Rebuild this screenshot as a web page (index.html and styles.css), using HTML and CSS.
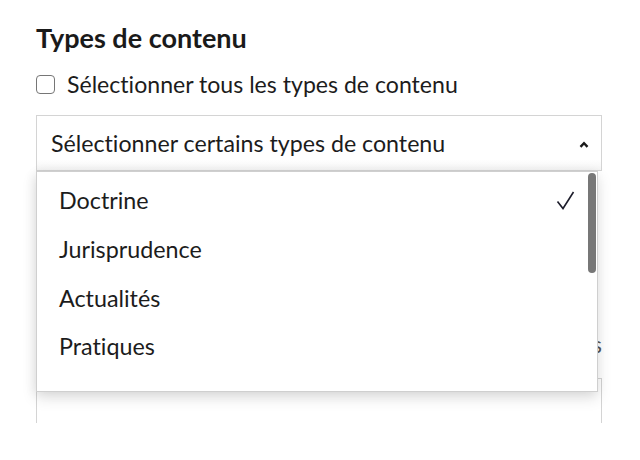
FILE: index.html
```html
<!DOCTYPE html>
<html lang="fr">
<head>
<meta charset="utf-8">
<link rel="stylesheet" href="styles.css">
</head>
<body>
<div class="page">
  <h2 class="title">Types de contenu</h2>
  <label class="check-row"><span class="checkbox"></span><span>Sélectionner tous les types de contenu</span></label>
  <div class="select-wrap">
    <div class="select">
      <span>Sélectionner certains types de contenu</span>
      <svg class="caret" width="10" height="7" viewBox="0 0 10 7"><polyline points="1.5,5.8 5,2.2 8.5,5.8" fill="none" stroke="#1a1a1a" stroke-width="2.4"/></svg>
    </div>
    <div class="under">
      <div class="under-text">Sources</div>
      <div class="under-box"></div>
    </div>
    <ul class="menu">
      <li class="item"><span>Doctrine</span><svg class="tick" width="20" height="20" viewBox="0 0 20 20"><polyline points="2.5,10.5 8,17.5 18.5,1" fill="none" stroke="#1d1d2b" stroke-width="1.6" stroke-linejoin="miter"/></svg></li>
      <li class="item"><span>Jurisprudence</span></li>
      <li class="item"><span>Actualités</span></li>
      <li class="item"><span>Pratiques</span></li>
      <li class="scrollbar"></li>
    </ul>
  </div>
</div>
</body>
</html>
```

FILE: styles.css
```css
html, body {
  margin: 0;
  padding: 0;
  background: #fff;
}
body {
  font-family: Lato, "Open Sans", sans-serif;
  font-variant-ligatures: none;
  color: #1c1c1c;
}
.page {
  padding: 20px 38px 0 36px;
}
.title {
  margin: 0;
  font-size: 27px;
  font-weight: 700;
  line-height: 36px;
  color: #1a1a1a;
}
.check-row {
  display: flex;
  align-items: center;
  gap: 12px;
  margin-top: 13px;
  font-size: 23.1px;
  line-height: 30px;
}
.checkbox {
  width: 17px;
  height: 17px;
  border: 1.5px solid #767676;
  border-radius: 4px;
  background: #fff;
  flex: none;
}
.select-wrap {
  position: relative;
  margin-top: 16px;
}
.select {
  display: flex;
  align-items: center;
  justify-content: space-between;
  height: 54px;
  padding: 0 12px 0 14px;
  border: 1px solid #d4d4d4;
  background: linear-gradient(#fff 80%, #f4f4f4);
  font-size: 23.2px;
}
.caret {
  margin-top: 2px;
}
.under {
  display: flex;
  flex-direction: column;
}
.under-text {
  text-align: right;
  font-size: 23px;
  line-height: 30px;
  margin-top: 158px;
  color: #555;
}
.under-box {
  margin-top: 19px;
  height: 44px;
  border: 1px solid #d4d4d4;
  border-bottom: none;
}
.menu {
  position: absolute;
  left: 0;
  top: 56px;
  width: 562px;
  height: 221px;
  margin: 0;
  padding: 4px 0 0 0;
  list-style: none;
  background: #fff;
  border: 1px solid #cfcfcf;
  box-shadow: 0 6px 14px rgba(0, 0, 0, 0.12), -2px 2px 10px rgba(0, 0, 0, 0.06);
  box-sizing: border-box;
}
.item {
  display: flex;
  align-items: center;
  justify-content: space-between;
  height: 48.7px;
  padding: 0 22px 0 22px;
  font-size: 23.3px;
}
.tick {
  margin-top: 1px;
}
.scrollbar {
  position: absolute;
  right: 1px;
  top: 1px;
  width: 8px;
  height: 100px;
  border-radius: 4px;
  background: #777;
}
```
